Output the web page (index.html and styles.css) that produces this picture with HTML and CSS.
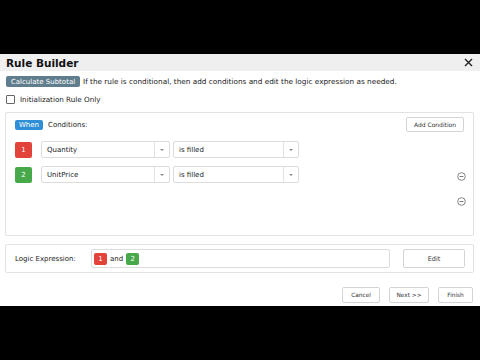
FILE: index.html
```html
<!DOCTYPE html>
<html>
<head>
<meta charset="utf-8">
<link rel="stylesheet" href="styles.css">
</head>
<body>
<div class="screen">
  <div class="bar-top"></div>
  <div class="dialog">
    <div class="header">
      <span class="title">Rule Builder</span>
      <svg class="close" width="9" height="9" viewBox="0 0 9 9"><path d="M1 1L8 8M8 1L1 8" stroke="#222" stroke-width="1.4" fill="none"/></svg>
    </div>
    <div class="body">
      <div class="intro">
        <span class="badge slate">Calculate Subtotal</span>
        <span class="intro-text">If the rule is conditional, then add conditions and edit the logic expression as needed.</span>
      </div>
      <label class="check-row"><span class="checkbox"></span><span class="check-label">Initialization Rule Only</span></label>
      <div class="panel conditions">
        <div class="cond-main">
          <div class="when-row">
            <span class="badge blue">When</span>
            <span class="cond-label">Conditions:</span>
            <span class="spacer"></span>
            <button class="btn add">Add Condition</button>
          </div>
          <div class="cond-row">
            <span class="num red">1</span>
            <div class="select field"><span class="val">Quantity</span><span class="arrow"><i></i></span></div>
            <div class="select op"><span class="val">is filled</span><span class="arrow"><i></i></span></div>
          </div>
          <div class="cond-row">
            <span class="num green">2</span>
            <div class="select field"><span class="val">UnitPrice</span><span class="arrow"><i></i></span></div>
            <div class="select op"><span class="val">is filled</span><span class="arrow"><i></i></span></div>
          </div>
        </div>
        <div class="icons">
          <svg class="minus" width="9" height="9" viewBox="0 0 9 9"><circle cx="4.5" cy="4.5" r="3.8" stroke="#666" stroke-width="0.8" fill="none"/><path d="M2.6 4.5H6.4" stroke="#666" stroke-width="0.9"/></svg>
          <svg class="minus" width="9" height="9" viewBox="0 0 9 9"><circle cx="4.5" cy="4.5" r="3.8" stroke="#666" stroke-width="0.8" fill="none"/><path d="M2.6 4.5H6.4" stroke="#666" stroke-width="0.9"/></svg>
        </div>
      </div>
      <div class="panel logic">
        <span class="logic-label">Logic Expression:</span>
        <div class="expr"><span class="chip red">1</span><span class="and">and</span><span class="chip green">2</span></div>
        <button class="btn edit">Edit</button>
      </div>
      <div class="footer">
        <button class="btn foot cancel">Cancel</button>
        <button class="btn foot next">Next &gt;&gt;</button>
        <button class="btn foot finish">Finish</button>
      </div>
    </div>
  </div>
  <div class="bar-bottom"></div>
</div>
</body>
</html>
```
FILE: styles.css
```css
html, body {
  margin: 0;
  padding: 0;
  background: #000;
}
.screen {
  width: 480px;
  height: 360px;
  display: flex;
  flex-direction: column;
  font-family: "DejaVu Sans", Verdana, sans-serif;
  font-size: 7px;
  color: #222;
  overflow: hidden;
}
.bar-top {
  height: 54px;
  background: #000;
}
.bar-bottom {
  flex: 1;
  background: #000;
}
.dialog {
  height: 252px;
  background: #fff;
  display: flex;
  flex-direction: column;
}
.header {
  height: 17px;
  background: #efefef;
  display: flex;
  align-items: center;
  justify-content: space-between;
  padding: 0 7px 0 6px;
}
.title {
  font-weight: bold;
  font-size: 10.5px;
  color: #111;
}
.close {
  display: block;
}
.body {
  padding: 5px 6px 0 5px;
  display: flex;
  flex-direction: column;
}
.intro {
  display: flex;
  align-items: center;
  height: 11px;
  padding-left: 1px;
  white-space: nowrap;
}
.badge {
  display: inline-flex;
  align-items: center;
  height: 11px;
  padding: 0 3px;
  border-radius: 2px;
  color: #fff;
}
.slate {
  background: #5f7d8c;
  width: 74px;
  box-sizing: border-box;
  justify-content: center;
}
.intro-text {
  margin-left: 3px;
  font-size: 7.3px;
  color: #222;
}
.check-row {
  display: flex;
  align-items: center;
  margin-top: 8px;
  padding-left: 1px;
  height: 9px;
}
.check-label {
  color: #222;
  font-size: 7.2px;
}
.checkbox {
  width: 7px;
  height: 7px;
  border: 1px solid #666;
  border-radius: 1px;
  background: #fff;
  margin-right: 5px;
}
.panel {
  border: 1px solid #e2e2e2;
  border-radius: 2px;
  box-sizing: border-box;
}
.conditions {
  margin-top: 8px;
  height: 124px;
  display: flex;
}
.cond-main {
  flex: 1;
  padding: 4px 0 0 9px;
}
.when-row {
  display: flex;
  align-items: center;
  height: 15px;
}
.blue {
  background: #2f8fd6;
  height: 10px;
  padding: 0 4px;
  width: 28px;
  box-sizing: border-box;
  justify-content: center;
}
.cond-label {
  margin-left: 5px;
  color: #222;
}
.spacer {
  flex: 1;
}
.btn {
  font-family: "DejaVu Sans", Verdana, sans-serif;
  font-size: 6px;
  color: #333;
  background: #fff;
  border: 1px solid #d4d4d4;
  border-radius: 2px;
  padding: 0;
  box-sizing: border-box;
}
.add {
  width: 58px;
  height: 15px;
  margin-right: -9px;
}
.cond-row {
  display: flex;
  align-items: center;
  height: 17px;
  margin-top: 9px;
}
.cond-row + .cond-row {
  margin-top: 8px;
}
.num {
  width: 17px;
  height: 16px;
  border-radius: 2px;
  color: #fff;
  display: flex;
  align-items: center;
  justify-content: center;
  margin-right: 9px;
}
.red {
  background: #e2433a;
}
.green {
  background: #48a94a;
}
.select {
  display: flex;
  height: 17px;
  border: 1px solid #dcdcdc;
  border-radius: 2px;
  box-sizing: border-box;
  background: #fff;
}
.select .val {
  flex: 1;
  display: flex;
  align-items: center;
  padding-left: 5px;
  color: #222;
}
.select .arrow {
  width: 14px;
  border-left: 1px solid #e2e2e2;
  display: flex;
  align-items: center;
  justify-content: center;
}
.select .arrow i {
  width: 0;
  height: 0;
  border-left: 2.5px solid transparent;
  border-right: 2.5px solid transparent;
  border-top: 2.5px solid #888;
}
.field {
  width: 129px;
  margin-right: 3px;
}
.op {
  width: 126px;
}
.icons {
  width: 18px;
  display: flex;
  flex-direction: column;
  align-items: center;
  padding-top: 59px;
  gap: 16px;
}
.minus {
  display: block;
  margin-right: 6px;
}
.logic {
  margin-top: 8px;
  height: 29px;
  display: flex;
  align-items: center;
  padding-left: 9px;
}
.logic-label {
  width: 76px;
  font-size: 7px;
  color: #222;
}
.expr {
  width: 299px;
  height: 19px;
  border: 1px solid #dcdcdc;
  border-radius: 2px;
  box-sizing: border-box;
  display: flex;
  align-items: center;
  padding-left: 2px;
}
.chip {
  width: 13px;
  height: 12px;
  border-radius: 2px;
  color: #fff;
  display: flex;
  align-items: center;
  justify-content: center;
}
.and {
  margin: 0 3px;
  font-size: 7px;
  color: #222;
}
.edit {
  width: 62px;
  height: 19px;
  margin-left: 13px;
  font-size: 6.5px;
}
.footer {
  display: flex;
  justify-content: flex-end;
  margin-top: 14px;
  padding-right: 1px;
  gap: 9px;
}
.foot {
  height: 16px;
  font-size: 5.8px;
}
.cancel { width: 38px; }
.next { width: 40px; }
.finish { width: 35px; }
```
